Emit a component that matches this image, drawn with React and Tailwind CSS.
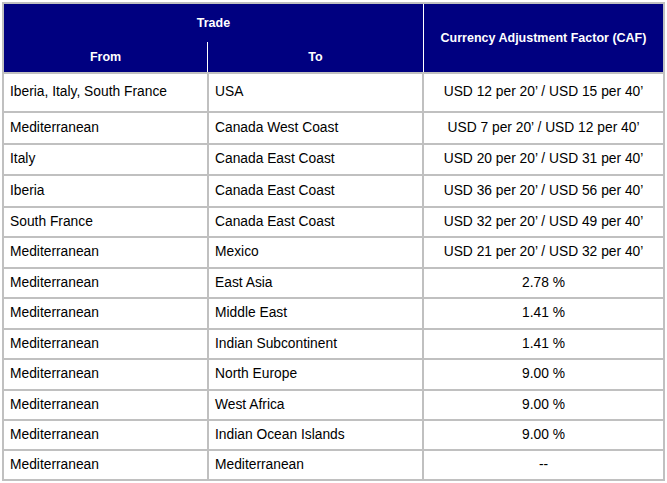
import React from "react";

const rows = [
  { from: "Iberia, Italy, South France", to: "USA", caf: "USD 12 per 20’ / USD 15 per 40’", h: "h-[39px]" },
  { from: "Mediterranean", to: "Canada West Coast", caf: "USD 7 per 20’ / USD 12 per 40’", h: "h-[32px]" },
  { from: "Italy", to: "Canada East Coast", caf: "USD 20 per 20’ / USD 31 per 40’", h: "h-[31px]" },
  { from: "Iberia", to: "Canada East Coast", caf: "USD 36 per 20’ / USD 56 per 40’", h: "h-[32px]" },
  { from: "South France", to: "Canada East Coast", caf: "USD 32 per 20’ / USD 49 per 40’", h: "h-[30px]" },
  { from: "Mediterranean", to: "Mexico", caf: "USD 21 per 20’ / USD 32 per 40’", h: "h-[31px]" },
  { from: "Mediterranean", to: "East Asia", caf: "2.78 %", h: "h-[30px]" },
  { from: "Mediterranean", to: "Middle East", caf: "1.41 %", h: "h-[31px]" },
  { from: "Mediterranean", to: "Indian Subcontinent", caf: "1.41 %", h: "h-[30px]" },
  { from: "Mediterranean", to: "North Europe", caf: "9.00 %", h: "h-[31px]" },
  { from: "Mediterranean", to: "West Africa", caf: "9.00 %", h: "h-[30px]" },
  { from: "Mediterranean", to: "Indian Ocean Islands", caf: "9.00 %", h: "h-[30px]" },
  { from: "Mediterranean", to: "Mediterranean", caf: "--", h: "h-[30px]" },
];

const App = () => {
  return (
    <div className="w-[667px] h-[483px] bg-white pt-[2px] pl-[2px]" style={{ fontFamily: '"Liberation Sans", Arial, sans-serif' }}>
      <div className="w-[663px] border-2 border-[#c0c0c0]">
        {/* header */}
        <div className="flex h-[68px] bg-[#000080] text-white font-bold text-[12.5px]">
          <div className="w-[419px] flex flex-col">
            <div className="h-[38px] flex items-center justify-center">Trade</div>
            <div className="flex flex-1">
              <div className="w-[204px] flex items-center justify-center border-r border-white">From</div>
              <div className="flex-1 flex items-center justify-center">To</div>
            </div>
          </div>
          <div className="flex-1 flex items-center justify-center border-l border-white">
            Currency Adjustment Factor (CAF)
          </div>
        </div>
        {/* body */}
        {rows.map((r, i) => (
          <div key={i} className={`flex border-t-2 border-[#c0c0c0] text-[13.8px] text-black ${r.h}`}>
            <div className="w-[203px] flex items-center pl-[6px]">{r.from}</div>
            <div className="w-[215px] flex items-center pl-[6px] border-l-2 border-[#c0c0c0]">{r.to}</div>
            <div className="flex-1 flex items-center justify-center border-l-2 border-[#c0c0c0]">{r.caf}</div>
          </div>
        ))}
      </div>
    </div>
  );
};

export default App;
